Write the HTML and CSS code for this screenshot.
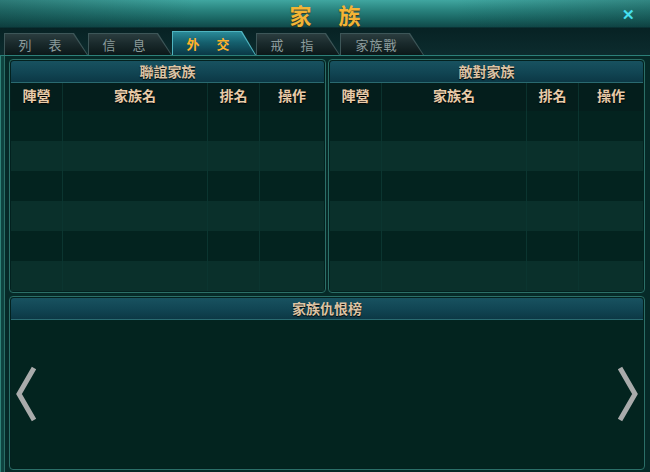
FILE: index.html
```html
<!DOCTYPE html>
<html lang="zh-Hant">
<head>
  <meta charset="UTF-8">
  <title>家族</title>
  <link rel="stylesheet" href="styles.css">
</head>
<body>
  <div class="window">
    <header class="titlebar">
      <h1>家 族</h1>
      <span class="close">✕</span>
    </header>
    <nav class="tabbar">
      <div class="tab"><span>列 表</span></div>
      <div class="tab"><span>信 息</span></div>
      <div class="tab active"><span>外 交</span></div>
      <div class="tab"><span>戒 指</span></div>
      <div class="tab"><span class="tight">家族戰</span></div>
    </nav>
    <main class="content">
      <div class="top">
        <section class="panel">
          <h2>聯誼家族</h2>
          <table class="list">
            <tr><th class="c1">陣營</th><th class="c2">家族名</th><th class="c3">排名</th><th>操作</th></tr>
            <tr><td></td><td></td><td></td><td></td></tr>
            <tr><td></td><td></td><td></td><td></td></tr>
            <tr><td></td><td></td><td></td><td></td></tr>
            <tr><td></td><td></td><td></td><td></td></tr>
            <tr><td></td><td></td><td></td><td></td></tr>
            <tr><td></td><td></td><td></td><td></td></tr>
          </table>
        </section>
        <section class="panel">
          <h2>敵對家族</h2>
          <table class="list">
            <tr><th class="c1">陣營</th><th class="c2">家族名</th><th class="c3">排名</th><th>操作</th></tr>
            <tr><td></td><td></td><td></td><td></td></tr>
            <tr><td></td><td></td><td></td><td></td></tr>
            <tr><td></td><td></td><td></td><td></td></tr>
            <tr><td></td><td></td><td></td><td></td></tr>
            <tr><td></td><td></td><td></td><td></td></tr>
            <tr><td></td><td></td><td></td><td></td></tr>
          </table>
        </section>
      </div>
      <section class="panel feud">
        <h2>家族仇恨榜</h2>
        <div class="feud-body">
          <svg class="arrow" width="22" height="56" viewBox="0 0 22 56">
            <polyline points="19,2 4,28 19,54" fill="none" stroke="#a9abab" stroke-width="5"/>
          </svg>
          <svg class="arrow" width="22" height="56" viewBox="0 0 22 56">
            <polyline points="3,2 18,28 3,54" fill="none" stroke="#a9abab" stroke-width="5"/>
          </svg>
        </div>
      </section>
    </main>
  </div>
</body>
</html>
```

FILE: styles.css
```css
body {
  margin: 0;
  background: #04201f;
  font-family: "Noto Sans CJK TC", "Noto Sans", sans-serif;
}
.window {
  width: 650px;
  height: 472px;
  display: flex;
  flex-direction: column;
  background: #0a2b2c;
  overflow: hidden;
}
.titlebar {
  height: 28px;
  box-sizing: border-box;
  display: grid;
  grid-template-columns: 1fr auto 1fr;
  align-items: center;
  background:
    linear-gradient(to right, rgba(10, 40, 42, 0.35), rgba(0, 0, 0, 0) 30%, rgba(0, 0, 0, 0) 70%, rgba(10, 40, 42, 0.25)),
    linear-gradient(to bottom, #40a6a0 0, #2a8580 35%, #1a6663 70%, #104a4a 100%);
  border-bottom: 1px solid #0a3234;
}
.titlebar h1 {
  grid-column: 2;
  margin: 0;
  padding: 0 4px;
  font-size: 22px;
  line-height: 26px;
  word-spacing: 22px;
  font-weight: bold;
  color: #f3b436;
  text-shadow: 0 1px 1px rgba(60, 30, 0, 0.7);
  white-space: nowrap;
}
.close {
  justify-self: end;
  margin-right: 15px;
  color: #46e0f0;
  font-size: 15px;
  font-weight: bold;
}
.tabbar {
  height: 27px;
  display: flex;
  align-items: flex-end;
  padding-left: 4px;
  background: linear-gradient(to bottom, #072224, #0c2c2e);
  border-bottom: 1px solid #2c8079;
}
.tab {
  width: 84px;
  height: 22px;
  padding: 1px 1px 0 1px;
  box-sizing: border-box;
  background: #3d5658;
  clip-path: polygon(0 0, calc(100% - 14px) 0, 100% 100%, 0 100%);
}
.tab span {
  display: flex;
  align-items: center;
  justify-content: center;
  height: 100%;
  padding-right: 12px;
  clip-path: polygon(0 0, calc(100% - 14px) 0, 100% 100%, 0 100%);
  background: linear-gradient(to bottom, #2b3d3f 0, #1a2a2c 45%, #0b1819 100%);
  color: #8c9c9c;
  font-size: 13px;
  letter-spacing: 7px;
  text-indent: 7px;
}
.tab span.tight {
  letter-spacing: 1px;
  text-indent: 1px;
}
.tab.active {
  height: 24px;
  background: #4fb4c0;
}
.tab.active span {
  background: linear-gradient(to bottom, #2a8a98 0, #15606e 45%, #0a3846 100%);
  color: #ffb22a;
  font-weight: bold;
}
.content {
  flex: 1;
  display: flex;
  flex-direction: column;
  gap: 3px;
  padding: 3px 5px 2px 8px;
  border-left: 1px solid #2f8278;
  box-shadow: inset 3px 0 0 #0e4440, inset 4px 0 0 #2a6e66;
  background: #062a28;
}
.top {
  display: grid;
  grid-template-columns: 1fr 1fr;
  gap: 2px;
}
.panel {
  display: flex;
  flex-direction: column;
  border: 1px solid #2b6f67;
  border-radius: 4px;
  padding: 1px;
  background: #03211f;
}
.panel h2 {
  margin: 0;
  height: 21px;
  line-height: 21px;
  font-size: 14px;
  font-weight: bold;
  text-align: center;
  color: #dcc3a4;
  background: linear-gradient(to bottom, #185260 0, #114553 55%, #0c3845 100%);
  border-bottom: 1px solid #2a6a70;
  border-radius: 3px 3px 0 0;
  text-shadow: 0 1px 1px #000;
}
.list {
  width: 100%;
  border-collapse: collapse;
  table-layout: fixed;
}
.list th {
  height: 24px;
  padding: 0 0 4px 0;
  font-size: 14px;
  font-weight: bold;
  color: #e8cba9;
  background: #041e1c;
  text-shadow: 0 1px 1px #000;
  border-left: 1px solid #0b322e;
}
.list th:first-child,
.list td:first-child {
  border-left: none;
}
.list .c1 { width: 51px; }
.list .c2 { width: 144px; }
.list .c3 { width: 51px; }
.list td {
  height: 30px;
  padding: 0;
  border-left: 1px solid #0b3530;
  background: #03231f;
}
.list tr:nth-child(odd) td {
  background: #0a302b;
}
.feud {
  flex: 1;
}
.feud-body {
  flex: 1;
  display: flex;
  align-items: center;
  justify-content: space-between;
  padding: 0 4px 0 4px;
  background: #03241f;
}
.arrow {
  display: block;
}
```
